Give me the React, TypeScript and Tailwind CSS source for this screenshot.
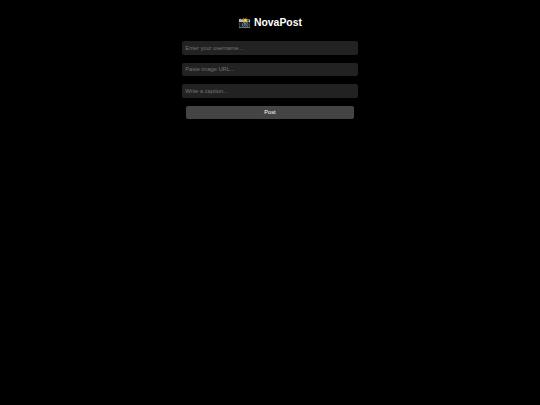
import React from 'react';

const fields = ['Enter your username...', 'Paste image URL...', 'Write a caption...'];

const App: React.FC = () => {
  return (
    <div className="min-h-[405px] bg-black flex flex-col items-center font-['Liberation_Sans',Arial,sans-serif] text-white">
      <h1 className="mt-[15px] h-[15px] text-[10.4px] leading-[15px] font-bold">📸 NovaPost</h1>
      <div className="mt-[11px] w-[175.5px] flex flex-col items-center">
        {fields.map((f) => (
          <input
            key={f}
            placeholder={f}
            className="mb-[8px] h-[13.5px] w-full rounded-[2px] bg-[#222222] px-[3px] text-[5.7px] text-white outline-none placeholder:text-[#757575]"
          />
        ))}
        <button className="h-[13.5px] w-[168.5px] rounded-[2px] bg-[#444444] text-[5.7px] text-white">
          Post
        </button>
      </div>
    </div>
  );
};

export default App;
